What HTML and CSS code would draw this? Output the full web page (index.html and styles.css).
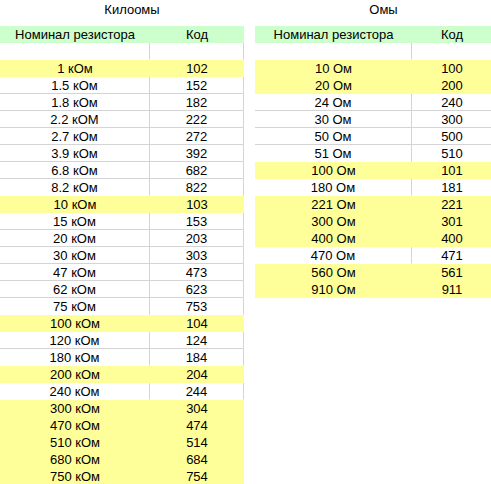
FILE: index.html
```html
<!DOCTYPE html>
<html lang="ru">
<head>
<meta charset="utf-8">
<title>Коды резисторов</title>
<link rel="stylesheet" href="styles.css">
</head>
<body>
<div class="sheet">
  <section class="tbl tbl-k">
    <div class="title">Килоомы</div>
    <div class="row head"><div class="c a">Номинал резистора</div><div class="c b">Код</div></div>
    <div class="row plain"><div class="c a"></div><div class="c b"></div></div>
    <div class="row hl"><div class="c a">1 кОм</div><div class="c b">102</div></div>
    <div class="row plain"><div class="c a">1.5 кОм</div><div class="c b">152</div></div>
    <div class="row plain"><div class="c a">1.8 кОм</div><div class="c b">182</div></div>
    <div class="row plain"><div class="c a">2.2 кОМ</div><div class="c b">222</div></div>
    <div class="row plain"><div class="c a">2.7 кОм</div><div class="c b">272</div></div>
    <div class="row plain"><div class="c a">3.9 кОм</div><div class="c b">392</div></div>
    <div class="row plain"><div class="c a">6.8 кОм</div><div class="c b">682</div></div>
    <div class="row plain"><div class="c a">8.2 кОм</div><div class="c b">822</div></div>
    <div class="row hl"><div class="c a">10 кОм</div><div class="c b">103</div></div>
    <div class="row plain"><div class="c a">15 кОм</div><div class="c b">153</div></div>
    <div class="row plain"><div class="c a">20 кОм</div><div class="c b">203</div></div>
    <div class="row plain"><div class="c a">30 кОм</div><div class="c b">303</div></div>
    <div class="row plain"><div class="c a">47 кОм</div><div class="c b">473</div></div>
    <div class="row plain"><div class="c a">62 кОм</div><div class="c b">623</div></div>
    <div class="row plain"><div class="c a">75 кОм</div><div class="c b">753</div></div>
    <div class="row hl"><div class="c a">100 кОм</div><div class="c b">104</div></div>
    <div class="row plain"><div class="c a">120 кОм</div><div class="c b">124</div></div>
    <div class="row plain"><div class="c a">180 кОм</div><div class="c b">184</div></div>
    <div class="row hl"><div class="c a">200 кОм</div><div class="c b">204</div></div>
    <div class="row plain"><div class="c a">240 кОм</div><div class="c b">244</div></div>
    <div class="row hl"><div class="c a">300 кОм</div><div class="c b">304</div></div>
    <div class="row hl"><div class="c a">470 кОм</div><div class="c b">474</div></div>
    <div class="row hl"><div class="c a">510 кОм</div><div class="c b">514</div></div>
    <div class="row hl"><div class="c a">680 кОм</div><div class="c b">684</div></div>
    <div class="row hl"><div class="c a">750 кОм</div><div class="c b">754</div></div>
  </section>
  <section class="tbl tbl-o">
    <div class="title">Омы</div>
    <div class="row head"><div class="c a">Номинал резистора</div><div class="c b">Код</div></div>
    <div class="row plain"><div class="c a"></div><div class="c b"></div></div>
    <div class="row hl"><div class="c a">10 Ом</div><div class="c b">100</div></div>
    <div class="row hl"><div class="c a">20 Ом</div><div class="c b">200</div></div>
    <div class="row plain"><div class="c a">24 Ом</div><div class="c b">240</div></div>
    <div class="row plain"><div class="c a">30 Ом</div><div class="c b">300</div></div>
    <div class="row plain"><div class="c a">50 Ом</div><div class="c b">500</div></div>
    <div class="row plain"><div class="c a">51 Ом</div><div class="c b">510</div></div>
    <div class="row hl"><div class="c a">100 Ом</div><div class="c b">101</div></div>
    <div class="row plain"><div class="c a">180 Ом</div><div class="c b">181</div></div>
    <div class="row hl"><div class="c a">221 Ом</div><div class="c b">221</div></div>
    <div class="row hl"><div class="c a">300 Ом</div><div class="c b">301</div></div>
    <div class="row hl"><div class="c a">400 Ом</div><div class="c b">400</div></div>
    <div class="row plain"><div class="c a">470 Ом</div><div class="c b">471</div></div>
    <div class="row hl"><div class="c a">560 Ом</div><div class="c b">561</div></div>
    <div class="row hl"><div class="c a">910 Ом</div><div class="c b">911</div></div>
  </section>
</div>
</body>
</html>
```
FILE: styles.css
```css
html, body {
  margin: 0;
  padding: 0;
  background: #ffffff;
}
body {
  font-family: "Liberation Sans", Arial, sans-serif;
  font-size: 13px;
  color: #000000;
  overflow: hidden;
}
.sheet {
  display: flex;
  gap: 11px;
  width: 491px;
  height: 484px;
  overflow: hidden;
}
.tbl {
  flex: none;
}
.tbl-k {
  width: 244px;
}
.tbl-o {
  width: 237px;
}
.title {
  box-sizing: border-box;
  height: 26px;
  padding: 2px 0 0 20px;
  line-height: 16px;
  text-align: center;
}
.row {
  display: flex;
  height: 17px;
}
.c {
  box-sizing: border-box;
  height: 17px;
  line-height: 17px;
  text-align: center;
  white-space: nowrap;
}
.tbl-k .a { width: 150px; }
.tbl-k .b { width: 94px; }
.tbl-o .a { width: 157px; }
.tbl-o .b { width: 80px; }

.head { background: #ccffcc; }
.hl { background: #ffff99; }

.plain .c {
  border-bottom: 1px solid #d4d4d4;
}
.plain .a {
  border-right: 1px solid #d4d4d4;
}
.tbl-k .plain .b {
  border-right: 1px solid #d4d4d4;
}
.plain:has(+ .hl) .c {
  border-bottom-color: #ffffff;
}
.tbl-o .plain:last-child .c {
  border-bottom-color: #ffffff;
}
```
